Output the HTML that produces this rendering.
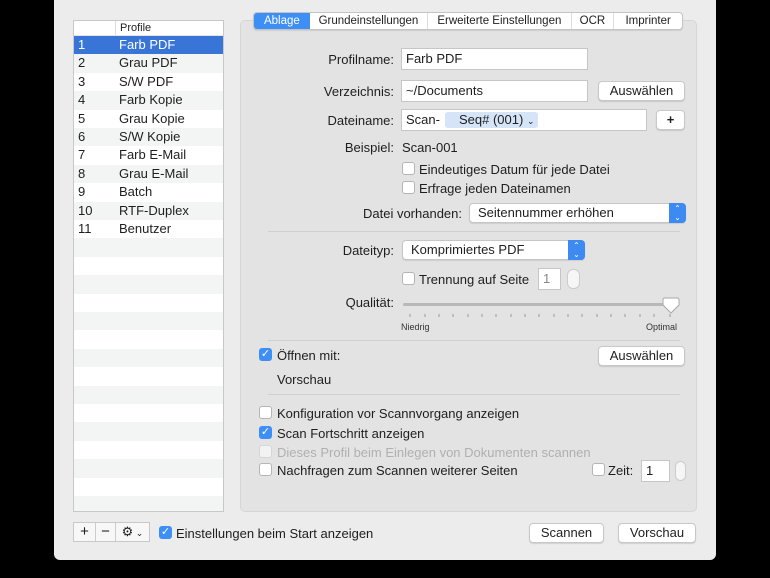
<!DOCTYPE html>
<html><head><meta charset="utf-8"><style>
*{box-sizing:border-box;margin:0;padding:0}
body{width:770px;height:578px;background:#000;position:relative;overflow:hidden;font-family:"Liberation Sans",sans-serif;font-size:13px;color:#1e1e1e}
.a{position:absolute;white-space:nowrap}
#win{position:absolute;left:54px;top:-10px;width:662px;height:570px;background:#ececec;border-radius:6px}
.list{left:73px;top:20px;width:151px;height:492px;background:#fff;border:1px solid #c8c8c8;overflow:hidden}
.row{position:absolute;left:0;width:149px;height:18.4px;line-height:18.4px}
.row span{position:absolute;left:4px}
.row b{font-weight:normal;position:absolute;left:45px}
.panel{left:240px;top:20px;width:457px;height:492px;background:#e3e3e3;border:1px solid #d6d6d6;border-radius:5px}
.tabs{left:253px;top:12px;height:18px;width:430px;background:#fff;border:1px solid #c4c4c4;border-radius:4px;display:flex;font-size:11.5px;overflow:hidden;box-shadow:0 1px 1px rgba(0,0,0,.1)}
.tabs div{border-right:1px solid #ddd;text-align:center;line-height:16px}
.lbl{text-align:right}
.inp{background:#fff;border:1px solid #c6c6c6;height:22px;line-height:20px;padding-left:4px}
.btn{background:#fff;border:1px solid #c8c8c8;border-radius:4px;height:20px;line-height:18px;text-align:center;box-shadow:0 1px 1px rgba(0,0,0,.12)}
.cb{width:13px;height:13px;background:#fff;border:1px solid #b5b5b5;border-radius:3px}
.cbc{width:13px;height:13px;background:#3d8ff5;border-radius:3px;color:#fff;font-size:11px;line-height:13px;text-align:center}
.sep{height:1px;background:#d0d0d0}
.sel{background:#fff;border:1px solid #c6c6c6;border-radius:4px;height:20px;line-height:18px;padding-left:8px;box-shadow:0 1px 1px rgba(0,0,0,.1)}
.sel i{position:absolute;right:-1px;top:-1px;width:17px;height:20px;background:#3c8af2;border-radius:0 4px 4px 0;color:#fff;font-style:normal;font-size:8px;line-height:9px;text-align:center;padding-top:1px}
</style></head><body>
<div id="win"></div>
<div class="a list">
 <div class="row" style="top:0;height:15px;line-height:14px;font-size:11px;border-bottom:1px solid #e5e5e5"><b style="left:41px;border-left:1px solid #ddd;padding-left:4px">Profile</b></div>
 <div class="row" style="top:15px;background:#3875d7;color:#fff"><span>1</span><b>Farb PDF</b></div>
 <div class="row" style="top:33.4px;background:#f3f4f4"><span>2</span><b>Grau PDF</b></div>
 <div class="row" style="top:51.8px"><span>3</span><b>S/W PDF</b></div>
 <div class="row" style="top:70.2px;background:#f3f4f4"><span>4</span><b>Farb Kopie</b></div>
 <div class="row" style="top:88.6px"><span>5</span><b>Grau Kopie</b></div>
 <div class="row" style="top:107px;background:#f3f4f4"><span>6</span><b>S/W Kopie</b></div>
 <div class="row" style="top:125.4px"><span>7</span><b>Farb E-Mail</b></div>
 <div class="row" style="top:143.8px;background:#f3f4f4"><span>8</span><b>Grau E-Mail</b></div>
 <div class="row" style="top:162.2px"><span>9</span><b>Batch</b></div>
 <div class="row" style="top:180.6px;background:#f3f4f4"><span>10</span><b>RTF-Duplex</b></div>
 <div class="row" style="top:199px"><span>11</span><b>Benutzer</b></div>
 <div class="row" style="top:217.4px;background:#f3f4f4"></div>
 <div class="row" style="top:254.2px;background:#f3f4f4"></div>
 <div class="row" style="top:291px;background:#f3f4f4"></div>
 <div class="row" style="top:327.8px;background:#f3f4f4"></div>
 <div class="row" style="top:364.6px;background:#f3f4f4"></div>
 <div class="row" style="top:401.4px;background:#f3f4f4"></div>
 <div class="row" style="top:438.2px;background:#f3f4f4"></div>
 <div class="row" style="top:475px;background:#f3f4f4"></div>
</div>
<div class="a panel"></div>
<div class="a tabs">
 <div style="width:56px;background:#3d8ff5;color:#fff;border:none">Ablage</div>
 <div style="width:119px">Grundeinstellungen</div>
 <div style="width:144px">Erweiterte Einstellungen</div>
 <div style="width:43px">OCR</div>
 <div style="width:68px;border:none">Imprinter</div>
</div>
<div class="a lbl" style="right:376px;top:52px">Profilname:</div>
<div class="a inp" style="left:401px;top:48px;width:187px">Farb PDF</div>
<div class="a lbl" style="right:376px;top:84px">Verzeichnis:</div>
<div class="a inp" style="left:401px;top:80px;width:187px">~/Documents</div>
<div class="a btn" style="left:598px;top:81px;width:87px">Auswählen</div>
<div class="a lbl" style="right:376px;top:113px">Dateiname:</div>
<div class="a inp" style="left:401px;top:109px;width:246px">Scan-</div>
<div class="a" style="left:445px;top:112px;width:93px;height:16px;background:#d6e4f7;border-radius:3px;line-height:16px;padding-left:14px">Seq# (001) <span style="font-size:9px">⌄</span></div>
<div class="a btn" style="left:656px;top:110px;width:29px;font-weight:bold">+</div>
<div class="a lbl" style="right:376px;top:140px">Beispiel:</div>
<div class="a" style="left:402px;top:140px">Scan-001</div>
<div class="a cb" style="left:402px;top:162px"></div><div class="a" style="left:419px;top:162px">Eindeutiges Datum für jede Datei</div>
<div class="a cb" style="left:402px;top:181px"></div><div class="a" style="left:419px;top:181px">Erfrage jeden Dateinamen</div>
<div class="a lbl" style="right:308px;top:206px">Datei vorhanden:</div>
<div class="a sel" style="left:469px;top:203px;width:217px">Seitennummer erhöhen<i>⌃<br>⌄</i></div>
<div class="a sep" style="left:268px;top:231px;width:412px"></div>
<div class="a lbl" style="right:376px;top:243px">Dateityp:</div>
<div class="a sel" style="left:402px;top:240px;width:183px">Komprimiertes PDF<i>⌃<br>⌄</i></div>
<div class="a cb" style="left:402px;top:272px"></div><div class="a" style="left:419px;top:272px">Trennung auf Seite</div>
<div class="a inp" style="left:538px;top:268px;width:23px;color:#888;height:22px">1</div>
<div class="a" style="left:567px;top:269px;width:13px;height:20px;border:1px solid #ccc;border-radius:6px;background:#f6f6f6"></div>
<div class="a lbl" style="right:376px;top:295px">Qualität:</div>
<div class="a" style="left:403px;top:303px;width:270px;height:3px;background:#b8b8b8;border-radius:2px"></div>
<svg class="a" style="left:400px;top:295px" width="285" height="40">
 <g stroke="#999" stroke-width="1">
 <line x1="10" y1="19" x2="10" y2="22"/><line x1="25" y1="19" x2="25" y2="22"/><line x1="39" y1="19" x2="39" y2="22"/><line x1="53" y1="19" x2="53" y2="22"/><line x1="68" y1="19" x2="68" y2="22"/><line x1="82" y1="19" x2="82" y2="22"/><line x1="96" y1="19" x2="96" y2="22"/><line x1="111" y1="19" x2="111" y2="22"/><line x1="125" y1="19" x2="125" y2="22"/><line x1="139" y1="19" x2="139" y2="22"/><line x1="154" y1="19" x2="154" y2="22"/><line x1="168" y1="19" x2="168" y2="22"/><line x1="182" y1="19" x2="182" y2="22"/><line x1="197" y1="19" x2="197" y2="22"/><line x1="211" y1="19" x2="211" y2="22"/><line x1="225" y1="19" x2="225" y2="22"/><line x1="240" y1="19" x2="240" y2="22"/><line x1="254" y1="19" x2="254" y2="22"/><line x1="270" y1="19" x2="270" y2="22"/></g>
 <path d="M264 3 H277 Q279 3 279 5 V10 L271 18 L263 10 V5 Q263 3 265 3Z" fill="#fff" stroke="#aaa"/>
 <text x="1" y="35" font-size="9" font-family="Liberation Sans" fill="#333">Niedrig</text>
 <text x="246" y="35" font-size="9" font-family="Liberation Sans" fill="#333">Optimal</text>
</svg>
<div class="a sep" style="left:268px;top:340px;width:412px"></div>
<div class="a cbc" style="left:259px;top:348px">✓</div><div class="a" style="left:277px;top:348px">Öffnen mit:</div>
<div class="a btn" style="left:598px;top:346px;width:87px">Auswählen</div>
<div class="a" style="left:277px;top:372px">Vorschau</div>
<div class="a sep" style="left:268px;top:394px;width:412px"></div>
<div class="a cb" style="left:259px;top:406px"></div><div class="a" style="left:277px;top:406px">Konfiguration vor Scannvorgang anzeigen</div>
<div class="a cbc" style="left:259px;top:426px">✓</div><div class="a" style="left:277px;top:426px">Scan Fortschritt anzeigen</div>
<div class="a cb" style="left:259px;top:445px;border-color:#d6d6d6;background:#f2f2f2"></div><div class="a" style="left:277px;top:445px;color:#b0b0b0">Dieses Profil beim Einlegen von Dokumenten scannen</div>
<div class="a cb" style="left:259px;top:463px"></div><div class="a" style="left:277px;top:463px">Nachfragen zum Scannen weiterer Seiten</div>
<div class="a cb" style="left:592px;top:463px"></div><div class="a" style="left:608px;top:463px">Zeit:</div>
<div class="a inp" style="left:641px;top:460px;width:29px">1</div>
<div class="a" style="left:675px;top:461px;width:11px;height:20px;border:1px solid #ccc;border-radius:6px;background:#f6f6f6"></div>
<div class="a" style="left:73px;top:522px;width:77px;height:20px;background:#f7f7f7;border:1px solid #c8c8c8;display:flex;font-size:15px;line-height:18px">
 <div style="width:22px;text-align:center;border-right:1px solid #ccc">+</div>
 <div style="width:20px;text-align:center;border-right:1px solid #ccc">−</div>
 <div style="flex:1;text-align:center;font-size:13px">⚙<span style="font-size:9px"> ⌄</span></div>
</div>
<div class="a cbc" style="left:159px;top:526px">✓</div><div class="a" style="left:176px;top:526px">Einstellungen beim Start anzeigen</div>
<div class="a btn" style="left:529px;top:523px;width:75px">Scannen</div>
<div class="a btn" style="left:618px;top:523px;width:78px">Vorschau</div>
</body></html>
